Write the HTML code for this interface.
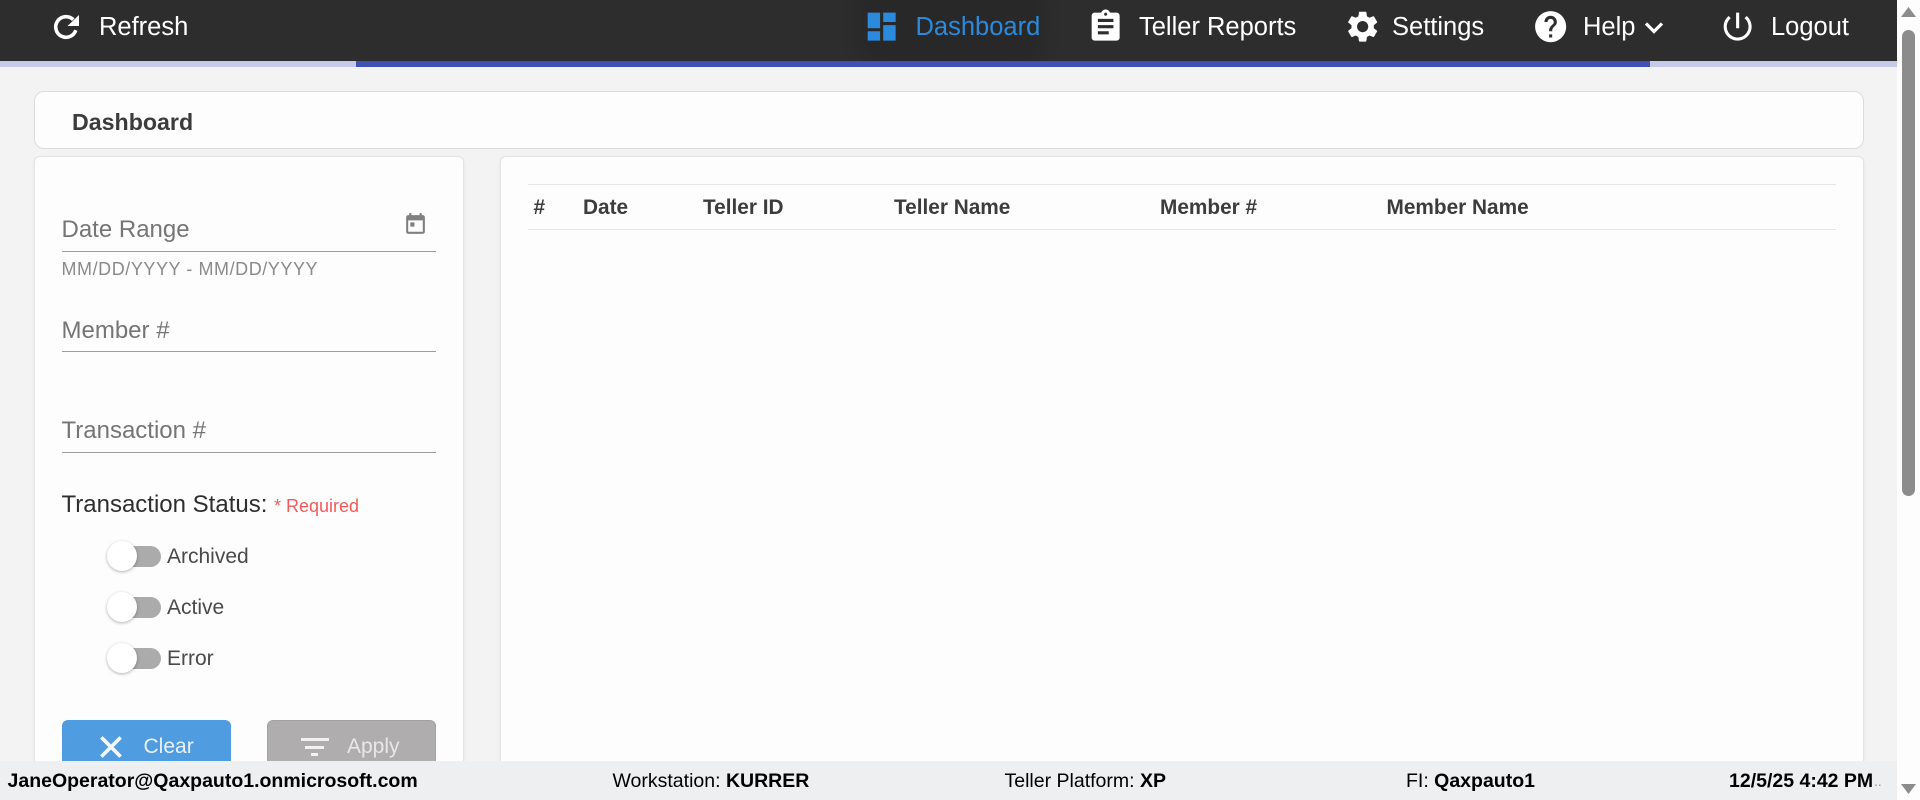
<!DOCTYPE html>
<html lang="en">
<head>
<meta charset="utf-8">
<title>Dashboard</title>
<style>
html,body{margin:0;padding:0;width:1920px;height:800px;overflow:hidden;background:#f3f3f3;font-family:"Liberation Sans",Arial,sans-serif}
#app{position:relative;width:1920px;height:800px;overflow:hidden}
#app div,#app span.t,#app svg,#app a{position:absolute}
.t{line-height:30px;white-space:nowrap}
.nav{color:#fff;font-size:25.5px;top:12px}
.card{background:#fdfdfd;box-sizing:border-box}
.lab{color:#757575;font-size:24px}
.line{left:62px;width:374px;height:1px;background:#9c9c9c}
.th{font-weight:bold;font-size:20.8px;color:#3c3c3c;top:193px}
.track{left:115px;width:46px;height:21px;border-radius:11px;background:#ababab}
.thumb{left:107px;width:30px;height:30px;border-radius:50%;background:#fff;box-shadow:0 1px 3px rgba(0,0,0,.3)}
.tl{left:167px;font-size:21px;color:#4a4a4a}
.btn{top:720px;width:169px;height:60px;border-radius:6px;box-sizing:border-box}
.ft{font-size:19.5px;color:#000;top:766px}
b{font-weight:bold}
</style>
</head>
<body>
<div id="app">
  <!-- header -->
  <div style="left:0;top:0;width:1897px;height:61px;background:#2d2d2d;overflow:hidden">
    <div style="left:868px;top:0;width:165px;height:54px;background:#282828;border-radius:0 0 10px 10px;box-shadow:0 0 14px 10px rgba(36,36,36,.45)"></div>
  </div>
  <div style="left:0;top:61px;width:1897px;height:6px;background:#c5cae9"></div>
  <div style="left:356px;top:61px;width:1294px;height:6px;background:#3f51b5"></div>

  <svg style="left:50px;top:10px" width="34" height="34" viewBox="0 0 34 34"><path d="M23.3 9.7A10.3 10.3 0 1 0 25.8 20.2" fill="none" stroke="#fff" stroke-width="3.6"/><path d="M29 5v11H17.5z" fill="#fff"/></svg>
  <span class="t nav" style="left:99px">Refresh</span>

  <svg style="left:863.3px;top:8.3px" width="37.3" height="37.3" viewBox="0 0 24 24" fill="#2b8ade"><path d="M3 13h8V3H3v10zm0 8h8v-6H3v6zm10 0h8V11h-8v10zm0-18v6h8V3h-8z"/></svg>
  <span class="t nav" style="left:915.5px;color:#2b8ade">Dashboard</span>

  <svg style="left:1087.3px;top:8.4px" width="37.3" height="37.3" viewBox="0 0 24 24" fill="#fff"><path d="M19 3h-4.18C14.4 1.84 13.3 1 12 1c-1.3 0-2.4.84-2.82 2H5c-1.1 0-2 .9-2 2v14c0 1.1.9 2 2 2h14c1.1 0 2-.9 2-2V5c0-1.1-.9-2-2-2zm-7 0c.55 0 1 .45 1 1s-.45 1-1 1-1-.45-1-1 .45-1 1-1zm2 14H7v-2h7v2zm3-4H7v-2h10v2zm0-4H7V7h10v2z"/></svg>
  <span class="t nav" style="left:1139px">Teller Reports</span>

  <svg style="left:1343.8px;top:8.3px" width="37.3" height="37.3" viewBox="0 0 24 24" fill="#fff"><path d="M19.14 12.94c.04-.3.06-.61.06-.94 0-.32-.02-.64-.07-.94l2.03-1.58c.18-.14.23-.41.12-.61l-1.92-3.32c-.12-.22-.37-.29-.59-.22l-2.39.96c-.5-.38-1.03-.7-1.62-.94l-.36-2.54c-.04-.24-.24-.41-.48-.41h-3.84c-.24 0-.43.17-.47.41l-.36 2.54c-.59.24-1.13.57-1.62.94l-2.39-.96c-.22-.08-.47 0-.59.22L2.74 8.87c-.12.21-.08.47.12.61l2.03 1.58c-.05.3-.09.63-.09.94s.02.64.07.94l-2.03 1.58c-.18.14-.23.41-.12.61l1.92 3.32c.12.22.37.29.59.22l2.39-.96c.5.38 1.03.7 1.62.94l.36 2.54c.05.24.24.41.48.41h3.84c.24 0 .44-.17.47-.41l.36-2.54c.59-.24 1.13-.56 1.62-.94l2.39.96c.22.08.47 0 .59-.22l1.92-3.32c.12-.22.07-.47-.12-.61l-2.01-1.58zM12 15.6c-1.98 0-3.6-1.62-3.6-3.6s1.62-3.6 3.6-3.6 3.6 1.62 3.6 3.6-1.62 3.6-3.6 3.6z"/></svg>
  <span class="t nav" style="left:1392px">Settings</span>

  <svg style="left:1531.8px;top:8.3px" width="37.3" height="37.3" viewBox="0 0 24 24" fill="#fff"><path d="M12 2C6.48 2 2 6.48 2 12s4.48 10 10 10 10-4.48 10-10S17.52 2 12 2zm1 17h-2v-2h2v2zm2.07-7.75l-.9.92C13.45 12.9 13 13.5 13 15h-2v-.5c0-1.1.45-2.1 1.17-2.83l1.24-1.26c.37-.36.59-.86.59-1.41 0-1.1-.9-2-2-2s-2 .9-2 2H8c0-2.21 1.79-4 4-4s4 1.79 4 4c0 .88-.36 1.68-.93 2.25z"/></svg>
  <span class="t nav" style="left:1583px">Help</span>
  <svg style="left:1643px;top:19.5px" width="22" height="14" viewBox="0 0 22 14" fill="none" stroke="#fff" stroke-width="3.2"><path d="M3 3.5l8 8 8-8"/></svg>

  <svg style="left:1719.3px;top:8.3px" width="37.3" height="37.3" viewBox="0 0 24 24" fill="#fff"><path d="M13 3h-2v10h2V3zm4.83 2.17l-1.42 1.42C17.99 7.86 19 9.81 19 12c0 3.87-3.13 7-7 7s-7-3.13-7-7c0-2.19 1.01-4.14 2.58-5.42L6.17 5.17C4.23 6.82 3 9.26 3 12c0 4.97 4.03 9 9 9s9-4.03 9-9c0-2.74-1.23-5.18-3.17-6.83z"/></svg>
  <span class="t nav" style="left:1771px">Logout</span>

  <!-- title card -->
  <div class="card" style="left:34px;top:91px;width:1830px;height:58px;border:1px solid #dcdcdc;border-radius:10px"></div>
  <span class="t" style="left:72px;top:107px;font-weight:bold;font-size:23.2px;color:#3c3c3c">Dashboard</span>

  <!-- filter card -->
  <div class="card" style="left:34px;top:156px;width:430px;height:660px;border:1px solid #e4e4e4;border-radius:6px;box-shadow:0 1px 3px rgba(0,0,0,.06)"></div>

  <span class="t lab" style="left:61.5px;top:215px">Date Range</span>
  <svg style="left:402.5px;top:211.5px" width="25" height="25" viewBox="0 0 24 24" fill="#808080"><path d="M19 3h-1V1h-2v2H8V1H6v2H5c-1.11 0-1.99.9-1.99 2L3 19c0 1.1.89 2 2 2h14c1.1 0 2-.9 2-2V5c0-1.1-.9-2-2-2zm0 16H5V8h14v11zM7 10h4v4H7z"/></svg>
  <div class="line" style="top:251px"></div>
  <span class="t" style="left:61.5px;top:254px;font-size:18px;color:#8a8a8a;letter-spacing:.56px">MM/DD/YYYY - MM/DD/YYYY</span>

  <span class="t lab" style="left:61.5px;top:316px">Member #</span>
  <div class="line" style="top:351px"></div>

  <span class="t lab" style="left:61.5px;top:416px">Transaction #</span>
  <div class="line" style="top:452px"></div>

  <span class="t" style="left:61.5px;top:490px;font-size:24px;color:#2e2e2e">Transaction Status:</span>
  <span class="t" style="left:274px;top:491px;font-size:18px;color:#f55a5a">* Required</span>

  <div class="track" style="top:546px"></div><div class="thumb" style="top:541px"></div>
  <span class="t tl" style="top:542px">Archived</span>
  <div class="track" style="top:597px"></div><div class="thumb" style="top:592px"></div>
  <span class="t tl" style="top:593px">Active</span>
  <div class="track" style="top:648px"></div><div class="thumb" style="top:643px"></div>
  <span class="t tl" style="top:644px">Error</span>

  <div class="btn" style="left:62px;background:#4f9ce0"></div>
  <svg style="left:92.5px;top:729px" width="36" height="36" viewBox="0 0 24 24" fill="#f4f8fc" stroke="#f4f8fc" stroke-width=".4"><path d="M19 6.41L17.59 5 12 10.59 6.41 5 5 6.41 10.59 12 5 17.59 6.41 19 12 13.41 17.59 19 19 17.59 13.41 12z"/></svg>
  <span class="t" style="left:143.5px;top:732px;font-size:21px;color:#e9f2fb">Clear</span>

  <div class="btn" style="left:267px;background:#afadae;border:1px solid #a3a3a3"></div>
  <div style="left:300.5px;top:738px;width:28px;height:3px;background:#f2f2f2"></div>
  <div style="left:305px;top:746px;width:19px;height:3px;background:#f2f2f2"></div>
  <div style="left:311px;top:753px;width:7px;height:3px;background:#f2f2f2"></div>
  <span class="t" style="left:347px;top:732px;font-size:21px;color:#e8e8e8">Apply</span>

  <!-- table card -->
  <div class="card" style="left:500px;top:156px;width:1364px;height:660px;border:1px solid #e4e4e4;border-radius:6px;box-shadow:0 1px 3px rgba(0,0,0,.06)"></div>
  <div style="left:528px;top:184px;width:1308px;height:1px;background:#e6e6e6"></div>
  <div style="left:528px;top:229px;width:1308px;height:1px;background:#e6e6e6"></div>
  <span class="t th" style="left:533.5px">#</span>
  <span class="t th" style="left:583px">Date</span>
  <span class="t th" style="left:703px">Teller ID</span>
  <span class="t th" style="left:894px">Teller Name</span>
  <span class="t th" style="left:1160px">Member #</span>
  <span class="t th" style="left:1386.5px">Member Name</span>

  <!-- footer -->
  <div style="left:0;top:761px;width:1897px;height:39px;background:#eeeff1"></div>
  <span class="t ft" style="left:7.5px"><b>JaneOperator@Qaxpauto1.onmicrosoft.com</b></span>
  <span class="t ft" style="left:612.5px">Workstation: <b>KURRER</b></span>
  <span class="t ft" style="left:1004.5px">Teller Platform: <b>XP</b></span>
  <span class="t ft" style="left:1406px">FI: <b>Qaxpauto1</b></span>
  <span class="t ft" style="left:1729px"><b>12/5/25 4:42 PM</b></span>
  <span class="t" style="left:1874px;top:766px;font-size:14px;color:#999">..</span>

  <!-- scrollbar -->
  <div style="left:1897px;top:0;width:23px;height:800px;background:#fdfdfd"></div>
  <div style="left:1902px;top:30px;width:13px;height:466px;background:#8c8c8c;border-radius:7px"></div>
  <svg style="left:1901px;top:7px" width="15" height="10" viewBox="0 0 15 10" fill="#8c8c8c"><path d="M7.5 0L15 10H0z"/></svg>
  <svg style="left:1901px;top:784px" width="15" height="10" viewBox="0 0 15 10" fill="#8c8c8c"><path d="M0 0h15L7.5 10z"/></svg>
</div>
</body>
</html>
